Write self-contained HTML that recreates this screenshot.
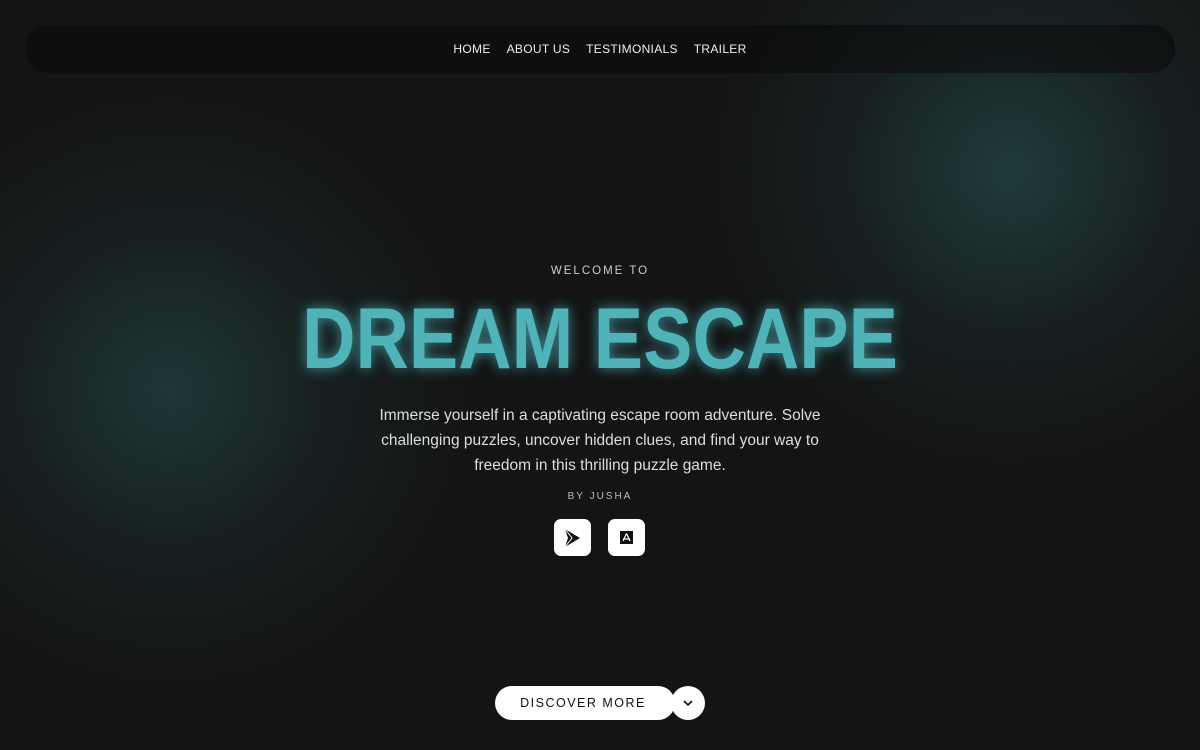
<!DOCTYPE html>
<html><head><style>
html,body{margin:0;width:1200px;height:750px;overflow:hidden;background:#141414;font-family:"Liberation Sans",sans-serif;color:#ddd}
.bg{position:absolute;inset:0;background:
radial-gradient(circle at 170px 390px,rgba(40,88,88,.5) 0,rgba(30,60,62,.28) 160px,rgba(20,20,20,0) 300px),
radial-gradient(circle at 1010px 170px,rgba(42,90,90,.55) 0,rgba(30,60,62,.3) 160px,rgba(20,20,20,0) 300px),
#141414}
nav{position:absolute;left:25px;top:25px;width:1150px;height:48px;border-radius:24px;background:rgba(10,10,10,.55);display:flex;justify-content:center;align-items:center;gap:16px;font-size:12px;color:#eee;letter-spacing:.3px}
.c{position:absolute;left:0;width:1200px;text-align:center}
h1{margin:0;font-size:86px;font-weight:bold;color:#4fb3b8;letter-spacing:0;text-shadow:0 0 14px rgba(80,200,210,.7);transform:scaleX(.86)}
.btn{position:absolute;top:519px;width:37px;height:37px;background:#fff;border-radius:7px}
</style></head><body>
<div class="bg"></div>
<nav><span>HOME</span><span>ABOUT US</span><span>TESTIMONIALS</span><span>TRAILER</span></nav>
<div class="c" style="top:265px;font-size:11.5px;letter-spacing:2px;color:#ccc">WELCOME TO</div>
<div class="c" style="top:290px"><h1>DREAM ESCAPE</h1></div>
<div class="c" style="top:403px;font-size:15.5px;line-height:25px;color:#ddd">Immerse yourself in a captivating escape room adventure. Solve<br>challenging puzzles, uncover hidden clues, and find your way to<br>freedom in this thrilling puzzle game.</div>
<div class="c" style="top:491px;font-size:10px;letter-spacing:2px;color:#bbb">BY JUSHA</div>
<div class="btn" style="left:554px"><svg width="37" height="37"><path d="M11 10 L26 19 L11 28 L14 19 Z" fill="#111"/><path d="M11 10 L18 19 L11 28" stroke="#fff" stroke-width="1" fill="none"/></svg></div>
<div class="btn" style="left:608px"><svg width="37" height="37"><rect x="12" y="12" width="13" height="13" fill="#111"/><path d="M18.5 14.5 L15 22 M18.5 14.5 L22 22 M15 20 H22" stroke="#fff" stroke-width="1.2"/></svg></div>
<div style="position:absolute;left:495px;top:686px;width:180px;height:34px;border-radius:17px;background:#fff;color:#111;font-size:12.5px;letter-spacing:1.5px;text-align:center;line-height:34px;text-indent:-4px">DISCOVER MORE</div>
<div style="position:absolute;left:671px;top:686px;width:34px;height:34px;border-radius:50%;background:#fff"><svg width="34" height="34"><path d="M13 15 L17 19 L21 15" stroke="#111" stroke-width="1.6" fill="none"/></svg></div>
</body></html>
